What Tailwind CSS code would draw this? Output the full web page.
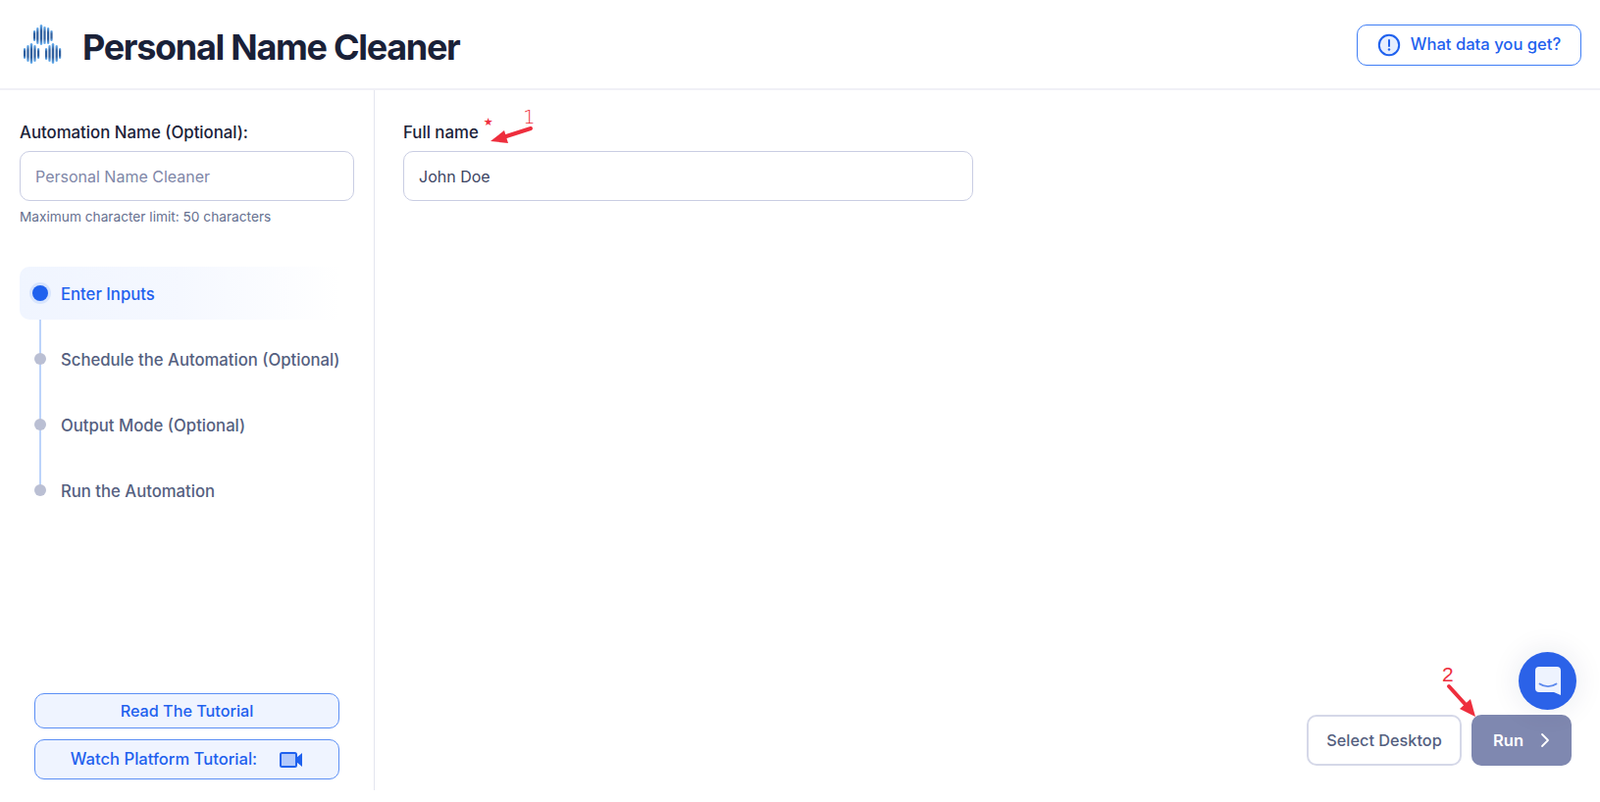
<!DOCTYPE html>
<html lang="en">
<head>
    <meta charset="UTF-8">
    <meta name="viewport" content="width=device-width, initial-scale=1.0">
    <title>Personal Name Cleaner</title>
    <script src="https://cdn.jsdelivr.net/npm/@tailwindcss/browser@4"></script>
</head>
<body class="relative h-[818px] overflow-hidden bg-white font-['Inter',sans-serif] text-[#1a2138]">
    <!-- Header -->
    <header class="flex h-[92px] items-center justify-between border-b-2 border-[#f0f0f6] pl-[23px] pr-[19px]">
        <div class="flex items-center gap-[19px]">
            <svg width="42" height="42" viewBox="0 0 42 42" fill="none">
                <defs>
                    <linearGradient id="bar" x1="0" y1="0" x2="0" y2="1">
                        <stop offset="0" stop-color="#6ab4f5"/>
                        <stop offset="0.3" stop-color="#2f5f9f"/>
                        <stop offset="0.7" stop-color="#2f5f9f"/>
                        <stop offset="1" stop-color="#6ab4f5"/>
                    </linearGradient>
                </defs>
                <g fill="url(#bar)">
                    <rect x="11" y="7" width="2.2" height="11" rx="1"/>
                    <rect x="14.2" y="4" width="2.2" height="17" rx="1"/>
                    <rect x="17.8" y="1" width="2.4" height="21" rx="1.2"/>
                    <rect x="21.4" y="3" width="2.2" height="18" rx="1"/>
                    <rect x="25" y="4" width="2.2" height="17" rx="1"/>
                    <rect x="28.4" y="7" width="2.2" height="11" rx="1"/>
                    <rect x="1" y="25" width="2.2" height="11" rx="1"/>
                    <rect x="4.4" y="22" width="2.2" height="17" rx="1"/>
                    <rect x="7.8" y="20" width="2.4" height="21" rx="1.2"/>
                    <rect x="11.4" y="22" width="2.2" height="17" rx="1"/>
                    <rect x="15" y="25" width="2.2" height="11" rx="1"/>
                    <rect x="23" y="25" width="2.2" height="12" rx="1"/>
                    <rect x="26.4" y="22" width="2.2" height="17" rx="1"/>
                    <rect x="29.8" y="20" width="2.4" height="21" rx="1.2"/>
                    <rect x="33.6" y="22" width="2.2" height="17" rx="1"/>
                    <rect x="37" y="25" width="2.2" height="11" rx="1"/>
                </g>
            </svg>
            <h1 class="mt-[6px] text-[36px] font-bold leading-none tracking-[-1.3px]">Personal Name Cleaner</h1>
        </div>
        <button class="mt-[1px] flex h-[42px] w-[229px] items-center justify-center gap-[10px] rounded-[10px] border border-[#3f7ef5] text-[16.6px] font-medium text-[#1f61ee]">
            <svg width="24" height="24" viewBox="0 0 24 24" fill="none">
                <circle cx="12" cy="12" r="10.2" fill="#e6eefe" stroke="#1f61ee" stroke-width="2"/>
                <path d="M12 7v6" stroke="#1f61ee" stroke-width="2" stroke-linecap="round"/>
                <circle cx="12" cy="16.5" r="1.2" fill="#1f61ee"/>
            </svg>
            What data you get?
        </button>
    </header>

    <div class="flex h-[714px]">
        <!-- Sidebar -->
        <aside class="flex w-[382px] shrink-0 flex-col justify-between border-r border-[#e4e6ef] pb-[11px] pl-[20px] pr-[20px] pt-[32px]">
            <div>
                <label class="block text-[16.8px] font-medium leading-[22px]">Automation Name (Optional):</label>
                <input class="mt-[8px] block h-[51px] w-[341px] rounded-[10px] border border-[#c9cde3] px-[15px] text-[16px] placeholder:text-[#7f87a8]" placeholder="Personal Name Cleaner">
                <p class="mt-[7px] text-[13.7px] leading-[18px] text-[#66708f]">Maximum character limit: 50 characters</p>

                <!-- Steps -->
                <div class="relative mt-[42px]">
                    <div class="absolute bottom-[26px] left-[20px] top-[26px] w-[2px] bg-[#bcd3fb]"></div>
                    <div class="relative flex h-[54px] w-[326px] items-center gap-[13px] rounded-l-[10px] bg-gradient-to-r from-[#f0f5ff] via-[#f5f8ff] to-white pl-[13px] text-[16.7px] font-medium text-[#1f61ee]">
                        <span class="h-[16px] w-[16px] rounded-full bg-[#1f61ee] ring-[3px] ring-[#d8e5fd]"></span>
                        <span class="mt-[3px]">Enter Inputs</span>
                    </div>
                    <div class="relative mt-[13px] flex h-[54px] items-center gap-[15px] pl-[15px] text-[16.7px] font-medium text-[#555f80]">
                        <span class="h-[12px] w-[12px] rounded-full bg-[#babfd3]"></span>
                        <span class="mt-[3px]">Schedule the Automation (Optional)</span>
                    </div>
                    <div class="relative mt-[13px] flex h-[54px] items-center gap-[15px] pl-[15px] text-[16.7px] font-medium text-[#555f80]">
                        <span class="h-[12px] w-[12px] rounded-full bg-[#babfd3]"></span>
                        <span class="mt-[3px]">Output Mode (Optional)</span>
                    </div>
                    <div class="relative mt-[13px] flex h-[54px] items-center gap-[15px] pl-[15px] text-[16.7px] font-medium text-[#555f80]">
                        <span class="h-[12px] w-[12px] rounded-full bg-[#babfd3]"></span>
                        <span class="mt-[3px]">Run the Automation</span>
                    </div>
                </div>
            </div>
            <div class="flex flex-col gap-[11px] pl-[15px]">
                <button class="h-[36px] w-[311px] rounded-[10px] border border-[#5c8ff5] bg-[#eff4ff] text-[16.2px] font-medium text-[#1f61ee]">Read The Tutorial</button>
                <button class="flex h-[41px] w-[311px] items-center justify-center gap-[23px] rounded-[10px] border border-[#5c8ff5] bg-[#eff4ff] text-[16.6px] font-medium text-[#1f61ee]">
                    Watch Platform Tutorial:
                    <svg width="24" height="16" viewBox="0 0 24 16">
                        <rect x="1" y="1" width="16" height="14" rx="1.5" fill="#b2c9fb" stroke="#1f61ee" stroke-width="2"/>
                        <path d="M17 6l6-5v14l-6-5z" fill="#1f61ee"/>
                    </svg>
                </button>
            </div>
        </aside>

        <!-- Main -->
        <main class="flex grow flex-col justify-between pb-[25px] pl-[29px] pr-[29px] pt-[32px]">
            <div>
                <label class="flex items-start gap-[5px] text-[16.8px] font-medium leading-[22px]">Full name <span class="mt-[-10px] font-['DejaVu_Sans',sans-serif] text-[11px] text-[#f0303f]">★</span></label>
                <input class="mt-[8px] block h-[51px] w-[581px] rounded-[10px] border border-[#c9cde3] px-[15px] text-[16px] text-[#3d4663]" value="John Doe">
            </div>
            <div class="flex justify-end gap-[10px]">
                <button class="h-[52px] w-[158px] rounded-[10px] border-2 border-[#d5d8e8] text-[16.3px] font-medium text-[#555f80]">Select Desktop</button>
                <button class="flex h-[52px] w-[102px] items-center justify-center gap-[17px] rounded-[10px] bg-[#7f88b0] text-[16.5px] font-semibold text-white">
                    Run
                    <svg width="10" height="16" viewBox="0 0 10 16" fill="none"><path d="M2 2l6 6-6 6" stroke="white" stroke-width="1.8" stroke-linecap="round" stroke-linejoin="round"/></svg>
                </button>
            </div>
        </main>
    </div>

    <!-- Chat launcher -->
    <div class="absolute left-[1548px] top-[665px] flex h-[59px] w-[59px] items-center justify-center rounded-full bg-[#2b62e8] shadow-[0_0_30px_rgba(30,40,90,0.1)]">
        <svg width="28" height="31" viewBox="0 0 28 31">
            <path d="M5 1h18a4 4 0 0 1 4 4v25l-7-3H5a4 4 0 0 1-4-4V5a4 4 0 0 1 4-4z" fill="#eef3fe"/>
            <path d="M5.500 18.500c5 3.500 12 3.500 17 0" fill="none" stroke="#5d8aee" stroke-width="1.8" stroke-linecap="round"/>
        </svg>
    </div>

    <!-- Red annotations -->
    <svg class="absolute left-[500px] top-[118px]" width="50" height="35" viewBox="0 0 50 35" fill="none">
        <path d="M41 13L13 22" stroke="#ee2e3d" stroke-width="4" stroke-linecap="round"/>
        <path d="M0 26L14 15l4 13z" fill="#ee2e3d"/>
    </svg>
    <span class="absolute left-[533px] top-[106px] font-['DejaVu_Sans',sans-serif] text-[20px] font-light leading-[26px] text-[#ee2e3d]">1</span>
    <svg class="absolute left-[1469px] top-[695px]" width="40" height="40" viewBox="0 0 40 40" fill="none">
        <path d="M8 5L28 27" stroke="#ee2e3d" stroke-width="4" stroke-linecap="round"/>
        <path d="M35 36L19 28 30 18z" fill="#ee2e3d"/>
    </svg>
    <span class="absolute left-[1470px] top-[675px] font-['Liberation_Sans',sans-serif] text-[21px] leading-[26px] text-[#ee2e3d]">2</span>
</body>
</html>
